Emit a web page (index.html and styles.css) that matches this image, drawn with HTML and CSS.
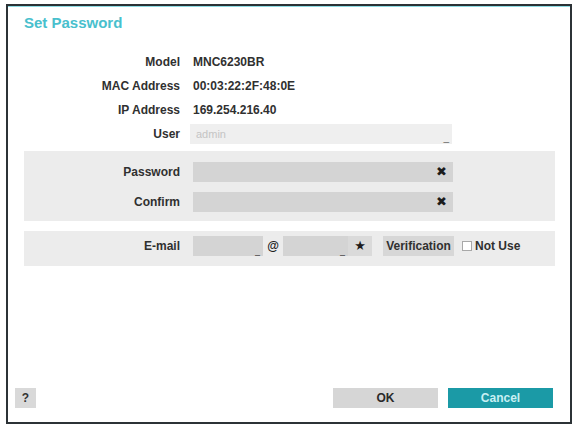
FILE: index.html
```html
<!DOCTYPE html>
<html lang="en">
  <head>
    <meta name="viewport" content="width=device-width, initial-scale=1">
    <link rel="stylesheet" href="styles.css">
  </head>
  <body>
    <div id="dialog">
      <div class="title">Set Password</div>
      <div class="content">
        <div class="info">
          <div class="label">Model</div>
          <div class="value">MNC6230BR</div>
          <div class="label">MAC Address</div>
          <div class="value">00:03:22:2F:48:0E</div>
          <div class="label">IP Address</div>
          <div class="value">169.254.216.40</div>
          <div class="label">User</div>
          <div class="select">admin<span class="mark">_</span></div>
        </div>

        <div class="panel pw">
          <div class="label">Password</div>
          <div class="field">✖</div>
          <div class="label">Confirm</div>
          <div class="field">✖</div>
        </div>

        <div class="panel mail">
          <div class="label">E-mail</div>
          <div class="mailRow">
            <div class="field small first"><span class="mark">_</span></div>
            <span class="at">@</span>
            <div class="field small second"><span class="mark">_</span></div>
            <div class="star">★</div>
            <div class="verify">Verification</div>
            <span class="check"></span>
            <span class="notUse">Not Use</span>
          </div>
        </div>
      </div>
      <div id="footer">
        <button class="help">?</button>
        <button class="ok">OK</button>
        <button class="cancel">Cancel</button>
      </div>
    </div>
  </body>
</html>
```

FILE: styles.css
```css
body {
  margin: 4px 0 0 6px;
  background: #ffffff;
  font-family: "Liberation Sans", Arial, sans-serif;
  font-size: 12px;
  font-weight: bold;
  color: #303030;
}
#dialog {
  width: 566px;
  height: 420px;
  box-sizing: border-box;
  border: 2px solid #2c3236;
  box-shadow: inset 0 1px 0 #8fdbe3;
  background: #ffffff;
  display: flex;
  flex-direction: column;
}
.title {
  padding: 7px 0 0 16px;
  line-height: 20px;
  font-size: 15px;
  color: #48c0cd;
}
.content {
  padding: 0 15px 0 16px;
}

.info {
  margin-top: 17px;
  display: grid;
  grid-template-columns: 156px 262px;
  grid-auto-rows: 24px;
  column-gap: 10px;
  align-items: center;
}
.label {
  text-align: right;
}
.value {
  padding-left: 3px;
}
.select {
  height: 20px;
  line-height: 20px;
  padding-left: 6px;
  background: #efefef;
  color: #c4c4c4;
  font-weight: normal;
  font-size: 11px;
  position: relative;
}
.mark {
  position: absolute;
  right: 3px;
  bottom: 1px;
  line-height: 10px;
  color: #666;
  font-size: 10px;
}

.panel {
  background: #ececec;
  display: grid;
  grid-template-columns: 156px auto;
  column-gap: 13px;
  align-items: center;
}
.pw {
  margin-top: 5px;
  padding: 11px 0 9px;
  grid-template-columns: 156px 260px;
  row-gap: 10px;
}
.field {
  height: 20px;
  line-height: 20px;
  background: #d4d4d4;
  text-align: right;
  padding-right: 6px;
  box-sizing: border-box;
  font-family: "DejaVu Sans", sans-serif;
  font-size: 13px;
  color: #1c1c1c;
  position: relative;
}
.mail {
  margin-top: 10px;
  padding: 5px 0 10px;
}
.mailRow {
  display: flex;
  align-items: center;
}
.field.small {
  padding: 0;
}
.first {
  width: 70px;
}
.second {
  width: 65px;
}
.at {
  width: 20px;
  text-align: center;
  font-size: 12px;
  color: #222;
}
.star {
  width: 24px;
  height: 20px;
  line-height: 20px;
  text-align: center;
  background: #dadada;
  font-family: "DejaVu Sans", sans-serif;
  font-size: 13px;
  color: #1c1c1c;
}
.verify {
  margin-left: 11px;
  width: 71px;
  height: 20px;
  line-height: 20px;
  text-align: center;
  background: #d7d7d7;
}
.check {
  margin-left: 8px;
  width: 8px;
  height: 8px;
  border: 1px solid #a8a8a8;
  background: #ffffff;
}
.notUse {
  margin-left: 3px;
}

#footer {
  margin-top: auto;
  padding: 0 17px 14px 7px;
  display: flex;
  align-items: center;
}
button {
  height: 20px;
  border: none;
  padding: 0;
  font-family: inherit;
  font-size: 12px;
  font-weight: bold;
  cursor: pointer;
}
button.help {
  width: 21px;
  background: #d9d9d9;
  color: #333;
  margin-right: auto;
}
button.ok {
  width: 105px;
  background: #d6d6d6;
  color: #2a2a2a;
}
button.cancel {
  width: 105px;
  margin-left: 10px;
  background: #1b9aa6;
  color: #c8f0f3;
}
```
